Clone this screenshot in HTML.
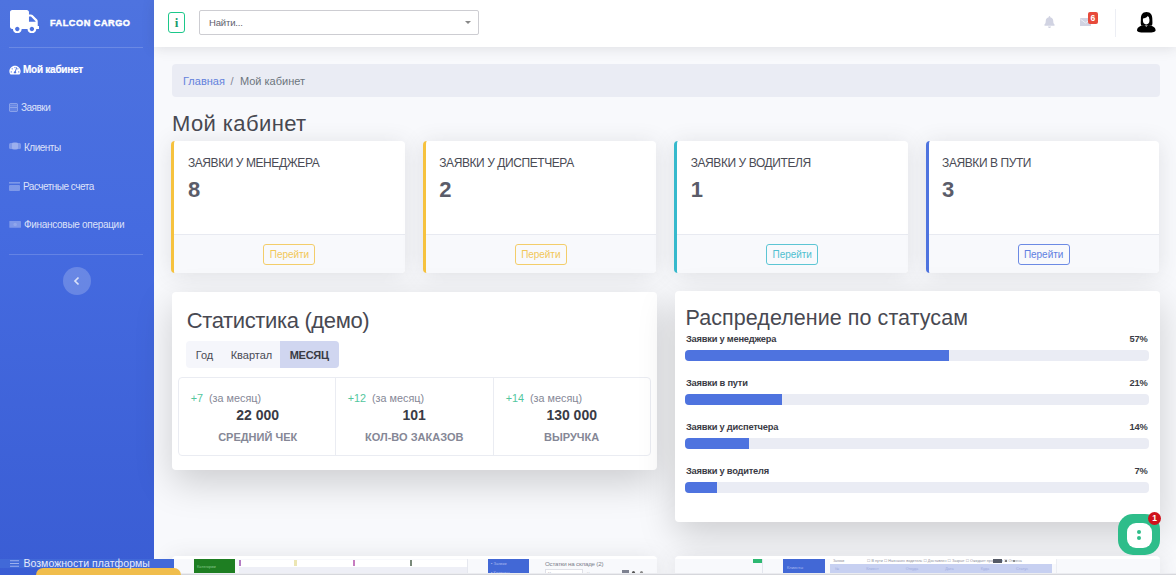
<!DOCTYPE html>
<html lang="ru">
<head>
<meta charset="utf-8">
<title>Falcon Cargo — Мой кабинет</title>
<style>
*{box-sizing:border-box;margin:0;padding:0}
html,body{width:1176px;height:575px;overflow:hidden}
body{position:relative;background:#f8f9fc;font-family:"Liberation Sans","DejaVu Sans",sans-serif;color:#5a5c69;font-size:12px}
.abs{position:absolute}
/* sidebar */
#sidebar{position:absolute;left:0;top:0;width:154px;height:575px;background:linear-gradient(180deg,#4e73df 0%,#456be0 40%,#3a5dd4 100%);overflow:hidden}
#sidebar .brand{position:absolute;left:50px;top:16.600px;color:#fff;font-weight:bold;font-size:9.200px;letter-spacing:.5px;-webkit-text-stroke:.45px #fff;white-space:nowrap;line-height:12px}
#sidebar hr{position:absolute;left:9px;width:134px;height:1px;border:0;background:rgba(255,255,255,.17)}
.nav{position:absolute;left:0;width:154px;height:14px;color:rgba(255,255,255,.82);font-size:10px;letter-spacing:-.5px;line-height:14px;white-space:nowrap}
.nav span{position:absolute;top:0}
.nav svg{position:absolute;left:9px}
.nav.active{color:#fff;font-weight:bold;letter-spacing:-.25px;-webkit-text-stroke:.2px #fff}
#toggle{position:absolute;left:63px;top:267px;width:28px;height:28px;border-radius:50%;background:rgba(255,255,255,.2)}
/* topbar */
#topbar{position:absolute;left:154px;top:0;width:1022px;height:47px;background:#fff;box-shadow:0 2px 12px rgba(58,59,69,.13)}
#info{position:absolute;left:14px;top:12px;width:17px;height:21px;border:1px solid #1cc88a;border-radius:3px;color:#1a9c6c;font-family:"Liberation Serif","DejaVu Serif",serif;font-weight:bold;font-size:13px;line-height:19px;text-align:center}
#search{position:absolute;left:45px;top:10px;width:280px;height:25px;border:1px solid #cdcdd2;border-radius:2px;background:#fff;font-size:9.5px;letter-spacing:-.15px;line-height:23px;padding-left:9px;color:#5e606c}
#search i{position:absolute;right:7px;top:10px;width:0;height:0;border-left:3px solid transparent;border-right:3px solid transparent;border-top:3px solid #888}
/* content */
#crumb{position:absolute;left:172px;top:64px;width:988px;height:33px;background:#eaecf4;border-radius:4px;font-size:11px;line-height:35.400px;padding-left:11px;color:#6c757d;white-space:nowrap}
#crumb a{color:#6381dc;text-decoration:none}
#crumb em{font-style:normal;color:#858796;padding:0 6.5px 0 5.5px}
h1{position:absolute;left:172px;top:110px;letter-spacing:.4px;font-size:22px;line-height:28px;font-weight:normal;color:#484952;white-space:nowrap}
.card{position:absolute;background:#fff;border-radius:4px;box-shadow:0 2px 22px rgba(58,59,69,.13);overflow:hidden}
.kpi{top:141.300px;width:233.700px;height:132px;border-left:3px solid #f6c23e}
.kpi .t{position:absolute;left:13.5px;top:14px;letter-spacing:-.42px;font-size:12px;line-height:16px;color:#4a4b55;white-space:nowrap;text-transform:uppercase}
.kpi .n{position:absolute;left:13.5px;top:36px;font-size:22px;line-height:26px;font-weight:bold;color:#5a5c69}
.kpi .f{position:absolute;left:0;right:0;top:93px;height:39px;background:#f8f9fc;border-top:1px solid #e8eaf1}
.kpi .b{position:absolute;left:89px;top:9px;width:52px;height:21px;border:1px solid #f3cd6a;border-radius:3px;color:#f2c758;font-size:10px;letter-spacing:-.05px;line-height:19px;text-align:center;white-space:nowrap}
h2{position:absolute;font-size:21.5px;letter-spacing:-.08px;line-height:28px;font-weight:normal;color:#484952;white-space:nowrap}

/* topbar right */
#bell{position:absolute;left:890px;top:16px}
#env{position:absolute;left:926px;top:17.500px}
#badge6{position:absolute;left:934px;top:11.500px;width:9.500px;height:12px;border-radius:2px;background:#e74a3b;color:#fff;font-size:8.500px;font-weight:bold;line-height:12px;text-align:center}
#tdiv{position:absolute;left:961px;top:9px;width:1px;height:28px;background:#eceef4}
#ava{position:absolute;left:983px;top:12.400px}
/* stats */
#stats{left:171.700px;top:292px;width:485px;height:177.500px;box-shadow:0 12.500px 37px rgba(0,0,0,.175)}
.tabs{position:absolute;left:14px;top:49px;width:153px;height:27px;background:#f5f6fb;border-radius:4px;font-size:11px;line-height:28px;color:#4a4b55;white-space:nowrap}
.tabs span{position:absolute;top:0}
.tabs .act{left:94px;width:59px;height:27px;background:#d0d6f0;border-radius:0 4px 4px 0;font-weight:bold;color:#3a3b45;text-align:center;font-size:11px;letter-spacing:-.3px}
.grid{position:absolute;left:6px;top:85px;width:473px;height:79px;border:1px solid #eaecf2;border-radius:4px}
.col{position:absolute;top:0;width:158px;height:77px;border-left:1px solid #eaecf2}
.col:first-child{border-left:0}
.col .d{position:absolute;left:12px;top:13px;font-size:10.8px;line-height:14px;color:#858796;white-space:nowrap}
.col .d b{font-weight:normal;color:#52c69d;margin-right:6px}
.col .v{position:absolute;left:0;right:0;top:28px;text-align:center;font-size:14px;line-height:18px;font-weight:bold;color:#3a3b45;white-space:nowrap}
.col .l{position:absolute;left:0;right:0;top:51px;text-align:center;font-size:11px;line-height:16px;font-weight:bold;color:#858796;white-space:nowrap;text-transform:uppercase}
/* distribution */
#dist{left:674.500px;top:291px;width:485px;height:230.500px;box-shadow:0 12.500px 37px rgba(0,0,0,.175)}
.row{position:absolute;left:10px;width:464px;height:26px}
.row .nm{position:absolute;left:1.500px;top:-1.100px;font-size:9.300px;letter-spacing:-.22px;line-height:12px;font-weight:bold;color:#3a3b45;white-space:nowrap}
.row .pc{position:absolute;right:1px;top:-1.100px;font-size:9.300px;letter-spacing:-.2px;line-height:12px;font-weight:bold;color:#3a3b45}
.row .bar{position:absolute;left:0;top:16.300px;width:464px;height:10.500px;border-radius:4px;background:#eaecf4;overflow:hidden}
.row .bar i{display:block;height:100%;background:#4e73df}
/* bottom strip */
.strip{top:555.700px;width:485px;height:30px;border-radius:4px 4px 0 0}
.strip .img{position:absolute;left:0;top:3.500px;width:485px;height:20px;background:#f8f9fc}
.tiny{position:absolute;font-size:5.500px;line-height:7px;color:#8b8d98;white-space:nowrap}
/* chat */
#chat{position:absolute;left:1118px;top:514px;width:42px;height:41px;border-radius:15px;background:#2ebd8a}
#chat .in{position:absolute;left:8.500px;top:8.500px;width:25px;height:25px;border-radius:9px;background:#fff}
#chat .dot{position:absolute;left:19px;width:4.400px;height:4.400px;border-radius:50%;background:#2ebd8a}
#cb{position:absolute;left:1148px;top:512px;width:13px;height:13px;border-radius:50%;background:#d0121c;color:#fff;font-size:8.500px;font-weight:bold;line-height:13px;text-align:center}
</style>
</head>
<body>

<div id="sidebar">
  <svg class="abs" style="left:10px;top:10px" width="29.200" height="23.400" viewBox="0 0 640 512"><path fill="#fff" d="M624 352h-16V243.900c0-12.700-5.100-24.900-14.100-33.900L494 110.100c-9-9-21.200-14.100-33.900-14.100H416V48c0-26.500-21.500-48-48-48H48C21.500 0 0 21.500 0 48v320c0 26.500 21.500 48 48 48h16c0 53 43 96 96 96s96-43 96-96h128c0 53 43 96 96 96s96-43 96-96h48c8.800 0 16-7.200 16-16v-32c0-8.800-7.200-16-16-16zM160 464c-26.500 0-48-21.500-48-48s21.500-48 48-48 48 21.500 48 48-21.500 48-48 48zm320 0c-26.500 0-48-21.500-48-48s21.500-48 48-48 48 21.500 48 48-21.500 48-48 48zm80-208H416V144h44.100l99.900 99.900V256z"/></svg>
  <div class="brand">FALCON CARGO</div>
  <hr style="top:47px">
  <div class="nav active" style="top:63px">
    <svg style="top:2px" width="12" height="10" viewBox="0 0 576 512"><path fill="#fff" d="M288 32C128.940 32 0 160.940 0 320c0 52.800 14.250 102.260 39.060 144.800 5.610 9.620 16.300 15.200 27.440 15.200h443c11.140 0 21.830-5.580 27.440-15.200C561.750 422.260 576 372.800 576 320c0-159.060-128.940-288-288-288zm0 64c14.710 0 26.580 10.130 30.320 23.650-1.110 2.260-2.640 4.230-3.450 6.670l-9.220 27.670c-5.130 3.490-10.970 6.010-17.640 6.010-17.670 0-32-14.330-32-32S270.330 96 288 96zM96 384c-17.670 0-32-14.330-32-32s14.330-32 32-32 32 14.330 32 32-14.330 32-32 32zm48-160c-17.670 0-32-14.330-32-32s14.330-32 32-32 32 14.330 32 32-14.330 32-32 32zm246.770-72.410l-61.330 184C343.130 347.330 352 364.540 352 384c0 11.720-3.380 22.550-8.880 32H232.880c-5.500-9.450-8.880-20.280-8.880-32 0-33.940 26.500-61.430 59.900-63.590l61.340-184.010c4.170-12.560 17.730-19.450 30.360-15.170 12.570 4.190 19.350 17.790 15.170 30.360zm14.660 57.200l15.520-46.550c3.470-1.290 7.130-2.230 11.050-2.230 17.670 0 32 14.330 32 32s-14.330 32-32 32c-11.380-.010-20.890-6.280-26.570-15.220zM480 384c-17.670 0-32-14.330-32-32s14.330-32 32-32 32 14.330 32 32-14.330 32-32 32z"/></svg>
    <span style="left:23px">Мой кабинет</span>
  </div>
  <div class="nav" style="top:101px">
    <svg style="top:2px" width="9" height="9" viewBox="0 0 9 9"><rect x=".5" y=".5" width="8" height="8" rx=".8" fill="rgba(255,255,255,.14)" stroke="rgba(255,255,255,.3)"/><rect x="1" y="4" width="7" height="1" fill="rgba(255,255,255,.28)"/><rect x="1" y="2" width="7" height="1" fill="rgba(255,255,255,.12)"/></svg>
    <span style="left:21px">Заявки</span>
  </div>
  <div class="nav" style="top:140.600px">
    <svg style="top:1.700px" width="12" height="8" viewBox="0 0 12 8"><rect x="0" y="1" width="12" height="6" rx="1.5" fill="rgba(255,255,255,.3)"/><rect x="3" y="0" width="6" height="8" rx="2" fill="rgba(255,255,255,.22)"/></svg>
    <span style="left:24px">Клиенты</span>
  </div>
  <div class="nav" style="top:179.700px">
    <svg style="top:2px" width="11" height="9" viewBox="0 0 11 9"><rect x="0" y="0" width="11" height="1.600" fill="rgba(255,255,255,.3)"/><rect x="0" y="3" width="11" height="6" rx="1" fill="rgba(255,255,255,.3)"/></svg>
    <span style="left:23px">Расчетные счета</span>
  </div>
  <div class="nav" style="top:218px">
    <svg style="top:3.200px" width="12.300" height="6.800" viewBox="0 0 12 7"><rect x="0" y="0" width="12" height="7" rx=".6" fill="rgba(255,255,255,.3)"/><rect x="4.200" y="1.700" width="3.600" height="3.600" rx="1.800" fill="rgba(255,255,255,.15)"/></svg>
    <span style="left:24px;letter-spacing:-.3px">Финансовые операции</span>
  </div>
  <hr style="top:254px">
  <div id="toggle"><svg class="abs" style="left:10px;top:9px" width="7" height="10" viewBox="0 0 7 10"><path d="M5.500 1.500L2 5l3.500 3.500" fill="none" stroke="#fff" stroke-opacity=".75" stroke-width="1.700"/></svg></div>
</div>

<div id="topbar">
  <div id="info">i</div>
  <div id="search">Найти...<i></i></div>
  <svg id="bell" width="11" height="12" viewBox="0 0 448 512"><path fill="#d1d3e2" d="M224 512c35.320 0 63.970-28.650 63.970-64H160.030c0 35.350 28.650 64 63.970 64zm215.390-149.710c-19.320-20.760-55.470-51.990-55.470-154.290 0-77.700-54.480-139.900-127.940-155.160V32c0-17.670-14.320-32-31.980-32s-31.980 14.330-31.980 32v20.840C118.560 68.100 64.080 130.300 64.080 208c0 102.300-36.150 133.530-55.470 154.290-6 6.450-8.660 14.160-8.610 21.710.11 16.400 12.980 32 32.100 32h383.800c19.120 0 32-15.600 32.100-32 .050-7.550-2.610-15.270-8.610-21.710z"/></svg>
  <svg id="env" width="11" height="8.500" viewBox="0 0 11 8.500"><rect width="11" height="8.500" rx=".8" fill="#d1d3e2"/><path d="M.5 1.200L5.500 5l5-3.800" fill="none" stroke="#eef0f7" stroke-width=".9"/></svg>
  <div id="badge6">6</div>
  <div id="tdiv"></div>
  <svg id="ava" width="19" height="21" viewBox="0 0 19 21"><path fill="#000" d="M9.500 0C5.600 0 3.900 2.900 3.900 6.500c0 3 -.5 5.200.3 6.900h10.800c.8-1.700.3-3.900.3-6.900C15.300 2.900 13.400 0 9.500 0z"/><path fill="#000" d="M0 18.400c0-3.400 4-5.400 9.300-5.400s9.300 2 9.300 5.400c0 1.600-4.600 2.200-9.300 2.200S0 20 0 18.400z"/><ellipse cx="9.200" cy="8" rx="3.300" ry="4.400" fill="#fff"/><path fill="#000" d="M5.500 6.600c2.300-.2 4.300-1.100 5.500-2.800.7 1.300 1.400 2.300 2 3.600l.6-2.900-2.600-2.900-4 .4z"/><path fill="#fff" d="M7.300 12.900c1.300.7 2.700.7 4 0l-2 1.900z"/></svg>
</div>

<div id="crumb"><a>Главная</a><em>/</em>Мой кабинет</div>
<h1>Мой кабинет</h1>

<div class="card kpi" style="left:171.400px"><div class="t">Заявки у менеджера</div><div class="n">8</div><div class="f"><div class="b">Перейти</div></div></div>
<div class="card kpi" style="left:422.800px"><div class="t">Заявки у диспетчера</div><div class="n">2</div><div class="f"><div class="b">Перейти</div></div></div>
<div class="card kpi" style="left:674.200px;border-left-color:#36b9cc"><div class="t">Заявки у водителя</div><div class="n">1</div><div class="f"><div class="b" style="border-color:#5cc5d4;color:#4fbfd0">Перейти</div></div></div>
<div class="card kpi" style="left:925.600px;border-left-color:#4e73df"><div class="t">Заявки в пути</div><div class="n">3</div><div class="f"><div class="b" style="border-color:#6c8ae4;color:#5f7fe1">Перейти</div></div></div>

<div class="card" id="stats">
  <h2 style="left:15px;top:15px;font-size:22px;letter-spacing:-.36px">Статистика (демо)</h2>
  <div class="tabs"><span style="left:10px">Год</span><span style="left:45px">Квартал</span><span class="act">МЕСЯЦ</span></div>
  <div class="grid">
    <div class="col" style="left:0"><div class="d"><b>+7</b>(за месяц)</div><div class="v">22 000</div><div class="l">Средний чек</div></div>
    <div class="col" style="left:156px"><div class="d"><b>+12</b>(за месяц)</div><div class="v">101</div><div class="l">Кол-во заказов</div></div>
    <div class="col" style="left:314px;width:157px"><div class="d"><b>+14</b>(за месяц)</div><div class="v">130 000</div><div class="l">Выручка</div></div>
  </div>
</div>

<div class="card" id="dist">
  <h2 style="left:11px;top:13px;letter-spacing:.06px">Распределение по статусам</h2>
  <div class="row" style="top:43px"><div class="nm">Заявки у менеджера</div><div class="pc">57%</div><div class="bar"><i style="width:57%"></i></div></div>
  <div class="row" style="top:87px"><div class="nm">Заявки в пути</div><div class="pc">21%</div><div class="bar"><i style="width:21%"></i></div></div>
  <div class="row" style="top:131px"><div class="nm">Заявки у диспетчера</div><div class="pc">14%</div><div class="bar"><i style="width:14%"></i></div></div>
  <div class="row" style="top:175px"><div class="nm">Заявки у водителя</div><div class="pc">7%</div><div class="bar"><i style="width:7%"></i></div></div>
</div>

<div class="card strip" style="left:172px">
  <div class="img">
    <div class="abs" style="left:22px;top:0;width:41px;height:16px;background:#1e7e22"></div>
    <div class="tiny" style="left:25px;top:4px;color:#86c98c;font-size:4px">Категории</div>
    <div class="abs" style="left:67px;top:.5px;width:228px;height:7.500px;background:#fff"></div>
    <div class="abs" style="left:67px;top:8px;width:228px;height:8px;background:#eeeff6"></div>
    <div class="abs" style="left:67px;top:1px;width:1.500px;height:6px;background:#b57cc4"></div>
    <div class="abs" style="left:121.500px;top:1px;width:3px;height:6px;background:#ece6b4"></div>
    <div class="abs" style="left:181px;top:1px;width:1.500px;height:6px;background:#c77cc0"></div>
    <div class="abs" style="left:238px;top:1px;width:1.500px;height:6px;background:#7a8a7a"></div>
    <div class="abs" style="left:295px;top:0;width:1px;height:16px;background:#e6e8ef"></div>
    <div class="abs" style="left:316px;top:0;width:41px;height:16px;background:#4268d6"></div>
    <div class="tiny" style="left:319px;top:1px;color:#aebcf0;font-size:4px">▪ Заявки</div>
    <div class="tiny" style="left:319px;top:10px;color:#aebcf0;font-size:4px">▪ Клиенты</div>
    <div class="tiny" style="left:373px;top:1px;font-size:6.200px;letter-spacing:-.2px;color:#7d7f8c">Остатки на складе (2)</div>
    <div class="abs" style="left:373px;top:10px;width:38px;height:8px;border:1px solid #dfe0e7;background:#fff"></div>
    <div class="tiny" style="left:376px;top:11.500px;font-size:3.500px;color:#b5b7c2">Материал</div>
    <div class="tiny" style="left:415px;top:11.500px;font-size:3.500px;color:#b5b7c2">Наименование</div>
    <div class="abs" style="left:450px;top:10.500px;width:6.500px;height:6px;background:#7d8190"></div>
    <div class="abs" style="left:460px;top:12px;width:3px;height:3px;border-radius:50%;background:#555"></div>
    <div class="abs" style="left:468px;top:12px;width:3px;height:3px;border-radius:50%;background:#888"></div>
  </div>
</div>
<div class="card strip" style="left:675px">
  <div class="img">
    <div class="abs" style="left:78px;top:0;width:9px;height:4px;background:#2eb872"></div>
    <div class="abs" style="left:87px;top:0;width:1px;height:16px;background:#e3e6ee"></div>
    <div class="abs" style="left:108px;top:0;width:42px;height:16px;background:#4268d6"></div>
    <div class="tiny" style="left:112px;top:5px;color:#aebcf0;font-size:4px">Клиенты</div>
    <div class="abs" style="left:155px;top:0;width:226px;height:4.500px;background:#fff"></div>
    <div class="tiny" style="left:158px;top:-1.500px;font-size:3.500px">Заявки</div>
    <div class="tiny" style="left:192px;top:-1.500px;font-size:3.700px;letter-spacing:.05px">☐ В пути ☐ Назначен водитель ☐ Доставлен ☐ Закрыт ☐ Ожидает проверки ☐ Отмена</div>
    <div class="abs" style="left:318px;top:-.300px;width:9px;height:4px;background:#555a66"></div>
    <div class="abs" style="left:329.500px;top:.5px;width:2.500px;height:2.500px;border-radius:50%;background:#555"></div>
    <div class="abs" style="left:337.500px;top:.5px;width:2.500px;height:2.500px;border-radius:50%;background:#777"></div>
    <div class="abs" style="left:155px;top:4.700px;width:221.500px;height:12px;background:#c7d0f1"></div>
    <div class="tiny" style="left:160px;top:7px;color:#9eabdf;font-size:3.800px;word-spacing:26px">№ Клиент Откуда Дата Куда Статус</div>
    <div class="abs" style="left:381px;top:0;width:1px;height:16px;background:#eceef3"></div>
  </div>
</div>
<div class="abs" style="left:154px;top:573px;width:1022px;height:1px;background:#ebecf0"></div>
<div class="abs" style="left:154px;top:574px;width:1022px;height:1px;background:#d6d7dc"></div>

<div class="abs" style="left:0;top:559px;width:174px;height:9px;background:#4169d8"></div>
<div class="abs" style="left:36px;top:568.400px;width:145px;height:14px;border-radius:7px;background:#f0bd4c"></div>
<div class="abs" style="left:10px;top:559.500px;width:9px;height:7px"><svg class="abs" style="left:0;top:0" width="9" height="7" viewBox="0 0 9 7"><path d="M0 .7h9M0 3.500h9M0 6.300h9" stroke="#9db0ee" stroke-width="1.100"/></svg></div>
<div class="abs" style="left:23.400px;top:556.200px;font-size:10.500px;letter-spacing:.06px;line-height:14px;color:#e6ebfb;white-space:nowrap">Возможности платформы</div>

<div id="chat"><div class="in"></div><div class="dot" style="top:15.700px"></div><div class="dot" style="top:21.600px"></div></div>
<div id="cb">1</div>

</body>
</html>
